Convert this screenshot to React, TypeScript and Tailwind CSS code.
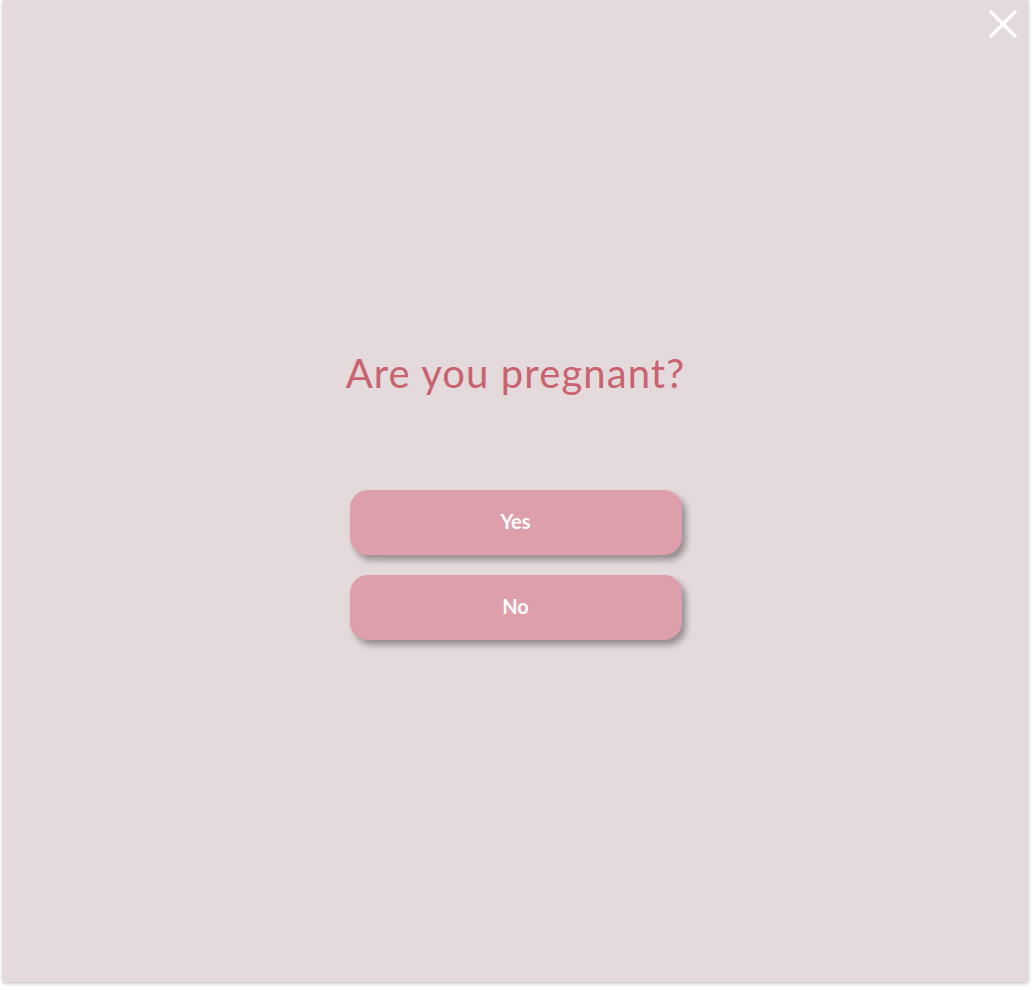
import React from 'react';

const answers = ['Yes', 'No'];

const App: React.FC = () => {
  return (
    <div className="w-[1032px] h-[990px] bg-white pl-[3px] pr-[4px] pb-[8px]">
      <div className="relative h-full bg-[#e4d9db] shadow-[0_1px_4px_rgba(0,0,0,0.3)] flex flex-col items-center">
        {/* close button */}
        <button className="absolute top-[9px] right-[10px] w-[30px] h-[30px] flex items-center justify-center">
          <svg width="30" height="30" viewBox="0 0 30 30" fill="none">
            <path d="M3 3L27 27M27 3L3 27" stroke="white" strokeWidth="3.5" strokeLinecap="round" />
          </svg>
        </button>

        <h1 className="mt-[349px] text-[40px] leading-[48px] font-normal text-[#c8636f] font-['Lato',sans-serif] tracking-[1.1px]">
          Are you pregnant?
        </h1>

        <div className="mt-[93px] flex flex-col gap-[20px]">
          {answers.map((a) => (
            <button
              key={a}
              className="w-[332px] h-[65px] pb-[4px] rounded-[18px] bg-[#dda0ab] text-white text-[20px] font-bold font-['Lato',sans-serif] shadow-[4px_5px_6px_rgba(0,0,0,0.35)]"
            >
              {a}
            </button>
          ))}
        </div>
      </div>
    </div>
  );
};

export default App;
